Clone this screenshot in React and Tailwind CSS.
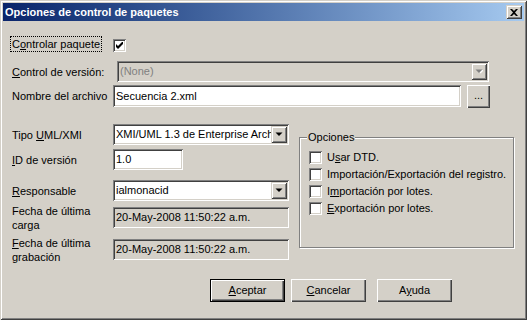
const sunken =
  "shadow-[inset_1px_1px_0_#808080,inset_-1px_-1px_0_#ffffff,inset_2px_2px_0_#404040,inset_-2px_-2px_0_#d4d0c8]";
const raised =
  "shadow-[inset_1px_1px_0_#d4d0c8,inset_-1px_-1px_0_#404040,inset_2px_2px_0_#ffffff,inset_-2px_-2px_0_#808080]";
const button =
  "shadow-[inset_1px_1px_0_#ffffff,inset_-1px_-1px_0_#404040,inset_-2px_-2px_0_#808080]";
const defButton =
  "shadow-[inset_0_0_0_1px_#000000,inset_2px_2px_0_#ffffff,inset_-2px_-2px_0_#404040,inset_-3px_-3px_0_#808080]";

function Arrow({ disabled }) {
  return (
    <svg width="8" height="5" viewBox="0 0 8 5">
      {disabled && <path d="M2 1h7L5.5 4.5z" fill="#ffffff" />}
      <path d="M0.5 0.5h7L4 4z" fill={disabled ? "#808080" : "#000000"} />
    </svg>
  );
}

function Combo({ width, value, disabled }) {
  return (
    <div
      className={`flex items-center h-[21px] p-[2px] ${sunken} ${
        disabled ? "bg-[#d4d0c8] text-[#808080]" : "bg-white text-black"
      } ${width}`}
    >
      <span className="flex-1 overflow-hidden whitespace-nowrap pl-[1px]">{value}</span>
      <div className={`w-[16px] h-[17px] bg-[#d4d0c8] flex items-center justify-center ${raised}`}>
        <Arrow disabled={disabled} />
      </div>
    </div>
  );
}

function Field({ width, value, readOnly, height = "h-[21px]" }) {
  return (
    <div
      className={`flex items-center pl-[3px] ${height} ${sunken} ${
        readOnly ? "bg-[#d4d0c8]" : "bg-white"
      } ${width} whitespace-nowrap overflow-hidden`}
    >
      <span>{value}</span>
    </div>
  );
}

function Check({ checked }) {
  return (
    <div className={`w-[13px] h-[13px] shrink-0 bg-white flex items-center justify-center ${sunken}`}>
      {checked && (
        <svg width="7" height="7" viewBox="0 0 7 7">
          <path d="M0 2v3l2 2 5-5V-1L2 4z" fill="#000000" />
        </svg>
      )}
    </div>
  );
}

function Label({ children, width = "w-[110px]" }) {
  return (
    <div className={`${width} pl-[9px] shrink-0 leading-[14px] whitespace-nowrap`}>
      <span>{children}</span>
    </div>
  );
}

export default function App() {
  return (
    <div className="w-[527px] h-[320px] bg-[#d4d0c8] p-[3px] flex flex-col text-[11px] text-black font-['Tahoma','Liberation_Sans',sans-serif] shadow-[inset_1px_1px_0_#d4d0c8,inset_-1px_-1px_0_#404040,inset_2px_2px_0_#ffffff,inset_-2px_-2px_0_#808080] select-none">
      {/* TITLE BAR */}
      <div className="h-[18px] flex items-center justify-between bg-linear-to-r from-[#0a246a] to-[#a6caf0] pl-[2px] pr-[2px]">
        <span className="text-white font-bold text-[11px]">Opciones de control de paquetes</span>
        <div className={`w-[16px] h-[14px] bg-[#d4d0c8] flex items-center justify-center ${raised}`}>
          <svg width="8" height="7" viewBox="0 0 8 7">
            <path d="M0 0h2l2 2 2-2h2L5 3.5 8 7H6L4 5 2 7H0l3-3.5z" fill="#000000" />
          </svg>
        </div>
      </div>

      {/* CONTROLAR PAQUETE */}
      <div className="flex items-start mt-[15px] h-[16px]">
        <div className="ml-[7px] w-[103px] shrink-0">
          <div className="inline-flex h-[16px] border border-dotted border-black items-center px-[1px] whitespace-nowrap">
            <span>
              C<u>o</u>ntrolar paquete
            </span>
          </div>
        </div>
        <div className="mt-[3px]">
          <Check checked />
        </div>
      </div>

      {/* CONTROL DE VERSION */}
      <div className="flex items-center mt-[9px]">
        <Label width="w-[114px]">
          <u>C</u>ontrol de versión:
        </Label>
        <Combo width="w-[372px]" value="(None)" disabled />
      </div>

      {/* NOMBRE */}
      <div className="flex items-start mt-[3px]">
        <div className="w-[110px] pl-[9px] shrink-0 h-[22px] flex items-center whitespace-nowrap">
          <span>Nombre del archivo</span>
        </div>
        <Field width="w-[348px]" height="h-[22px]" value="Secuencia 2.xml" />
        <div className={`ml-[6px] w-[23px] h-[23px] flex items-center justify-center pb-[3px] ${button}`}>...</div>
      </div>

      {/* LOWER */}
      <div className="flex items-start mt-[16px] h-[133px]">
        <div className="flex flex-col w-[286px]">
          <div className="flex items-center">
            <Label>
              Tipo <u>U</u>ML/XMI
            </Label>
            <Combo width="w-[176px]" value="XMI/UML 1.3 de Enterprise Architect" />
          </div>
          <div className="flex items-center mt-[4px]">
            <Label>
              <u>I</u>D de versión
            </Label>
            <Field width="w-[70px]" value="1.0" />
          </div>
          <div className="flex items-center mt-[10px]">
            <Label>
              <u>R</u>esponsable
            </Label>
            <Combo width="w-[176px]" value="ialmonacid" />
          </div>
          <div className="flex items-start mt-[6px]">
            <div className="w-[110px] pl-[9px] shrink-0 leading-[14px] -mt-[3px]">
              Fecha de última
              <br />
              carga
            </div>
            <Field width="w-[176px]" readOnly value="20-May-2008 11:50:22 a.m." />
          </div>
          <div className="flex items-start mt-[7px]">
            <div className="w-[110px] pl-[9px] shrink-0 leading-[14px] -mt-[3px]">
              <u>F</u>echa de última
              <br />
              grabación
            </div>
            <Field width="w-[176px]" readOnly value="20-May-2008 11:50:22 a.m." />
          </div>
        </div>

        {/* OPCIONES GROUP */}
        <div className="relative ml-[10px] mt-[13px] w-[215px] h-[111px] border border-[#808080] shadow-[inset_1px_1px_0_#ffffff,1px_1px_0_#ffffff] pt-[13px] pl-[9px] flex flex-col gap-[4px]">
          <span className="absolute -top-[8px] left-[7px] bg-[#d4d0c8] px-[1px] leading-[14px]">Opciones</span>
          <div className="flex items-center h-[13px] whitespace-nowrap">
            <Check />
            <span className="ml-[5px]">
              U<u>s</u>ar DTD.
            </span>
          </div>
          <div className="flex items-center h-[13px] whitespace-nowrap">
            <Check />
            <span className="ml-[5px]">Importación/Exportación del registro.</span>
          </div>
          <div className="flex items-center h-[13px] whitespace-nowrap">
            <Check />
            <span className="ml-[5px]">
              I<u>m</u>portación por lotes.
            </span>
          </div>
          <div className="flex items-center h-[13px] whitespace-nowrap">
            <Check />
            <span className="ml-[5px]">
              <u>E</u>xportación por lotes.
            </span>
          </div>
        </div>
      </div>

      {/* BUTTONS */}
      <div className="flex mt-[22px] pl-[207px]">
        <div className={`w-[75px] h-[23px] flex items-center justify-center ${defButton}`}>
          <span>
            <u>A</u>ceptar
          </span>
        </div>
        <div className={`ml-[6px] w-[75px] h-[23px] flex items-center justify-center ${button}`}>
          <span>
            <u>C</u>ancelar
          </span>
        </div>
        <div className={`ml-[11px] w-[75px] h-[23px] flex items-center justify-center ${button}`}>
          <span>
            A<u>y</u>uda
          </span>
        </div>
      </div>
    </div>
  );
}
